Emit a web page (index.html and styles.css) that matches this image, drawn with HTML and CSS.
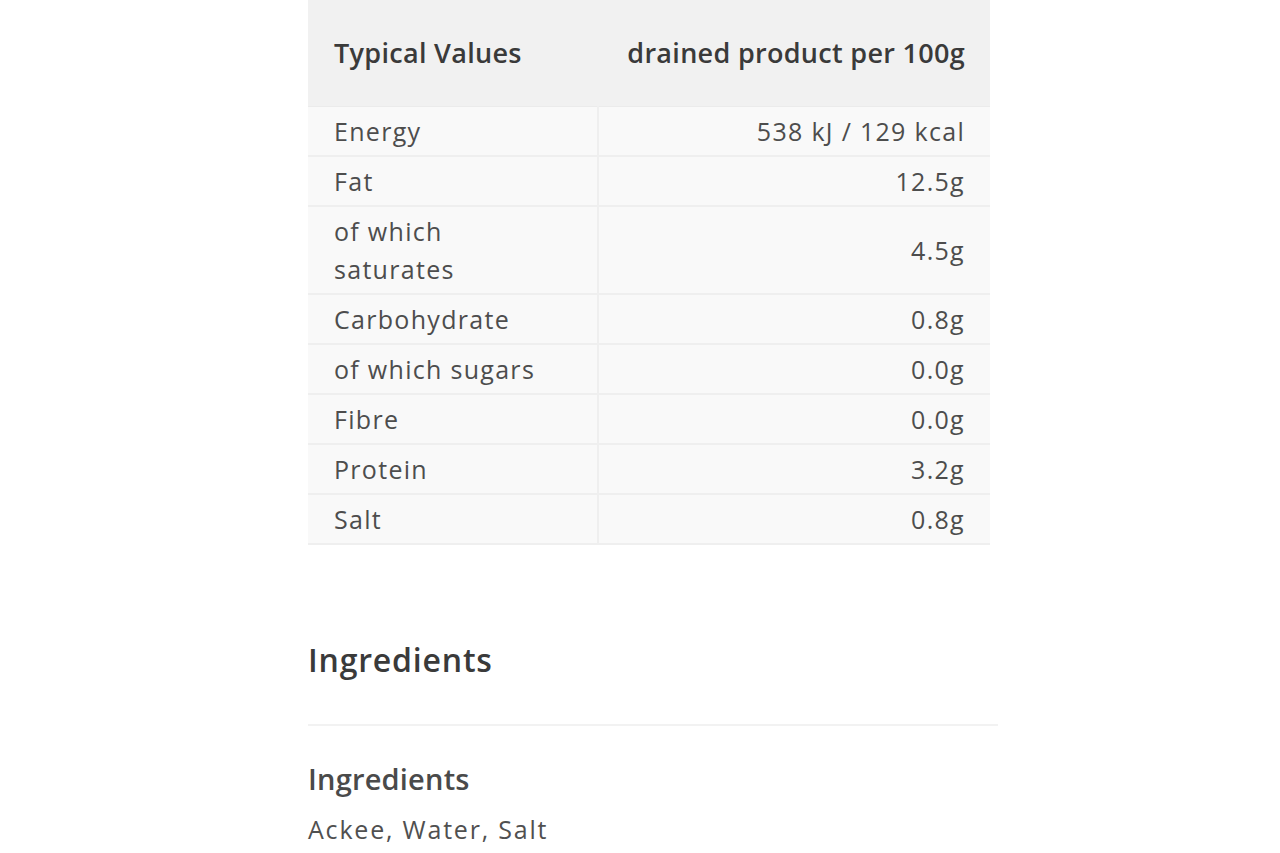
FILE: index.html
```html
<!DOCTYPE html>
<html lang="en">
<head>
<meta charset="utf-8">
<title>Nutrition</title>
<link rel="stylesheet" href="styles.css">
</head>
<body>
<main class="content">
  <table class="nutrition">
    <colgroup>
      <col class="col-label">
      <col class="col-value">
    </colgroup>
    <thead>
      <tr>
        <th class="label">Typical Values</th>
        <th class="value">drained product per 100g</th>
      </tr>
    </thead>
    <tbody>
      <tr><td class="label">Energy</td><td class="value">538 kJ / 129 kcal</td></tr>
      <tr><td class="label">Fat</td><td class="value">12.5g</td></tr>
      <tr><td class="label">of which saturates</td><td class="value">4.5g</td></tr>
      <tr><td class="label">Carbohydrate</td><td class="value">0.8g</td></tr>
      <tr><td class="label">of which sugars</td><td class="value">0.0g</td></tr>
      <tr><td class="label">Fibre</td><td class="value">0.0g</td></tr>
      <tr><td class="label">Protein</td><td class="value">3.2g</td></tr>
      <tr><td class="label">Salt</td><td class="value">0.8g</td></tr>
    </tbody>
  </table>

  <section class="ingredients">
    <h2 class="section-title">Ingredients</h2>
    <div class="ingredients-body">
      <h3 class="sub-title">Ingredients</h3>
      <p class="ingredients-text">Ackee, Water, Salt</p>
    </div>
  </section>
</main>
</body>
</html>
```
FILE: styles.css
```css
html, body {
  margin: 0;
  padding: 0;
  background: #ffffff;
}
body {
  font-family: "Open Sans", Lato, sans-serif;
  color: #4a4a4a;
}
.content {
  width: 690px;
  margin-left: 308px;
}
.nutrition {
  width: 682px;
  table-layout: fixed;
  border-collapse: collapse;
  font-size: 25px;
  line-height: 38px;
  letter-spacing: 1.3px;
}
.col-label {
  width: 290px;
}
.col-value {
  width: 392px;
}
.nutrition th {
  background: #f1f1f1;
  font-size: 27px;
  font-weight: 600;
  letter-spacing: 0.3px;
  color: #3a3a3a;
  padding: 34px 25px 34px 26px;
  border-bottom: 1px solid #ebebeb;
}
.nutrition td {
  background: #f9f9f9;
  padding: 5px 25px 5px 26px;
  border-bottom: 2px solid #efefef;
  color: #4d4d4d;
  font-weight: 400;
}
.nutrition .label {
  text-align: left;
}
.nutrition td.label {
  padding-right: 40px;
  border-right: 2px solid #efefef;
}
.nutrition .value {
  text-align: right;
}
.ingredients {
  padding-top: 95px;
}
.section-title {
  margin: 0;
  font-size: 32px;
  line-height: 40px;
  font-weight: 600;
  letter-spacing: 0.8px;
  color: #3a3a3a;
  border-bottom: 2px solid #f2f2f2;
  padding-bottom: 44px;
}
.ingredients-body {
  padding-top: 33px;
}
.sub-title {
  margin: 0;
  font-size: 29px;
  line-height: 40px;
  font-weight: 600;
  letter-spacing: 0.2px;
  color: #4a4a4a;
}
.ingredients-text {
  margin: 12px 0 0;
  font-size: 25px;
  line-height: 36px;
  letter-spacing: 1.8px;
  color: #505050;
}
```
